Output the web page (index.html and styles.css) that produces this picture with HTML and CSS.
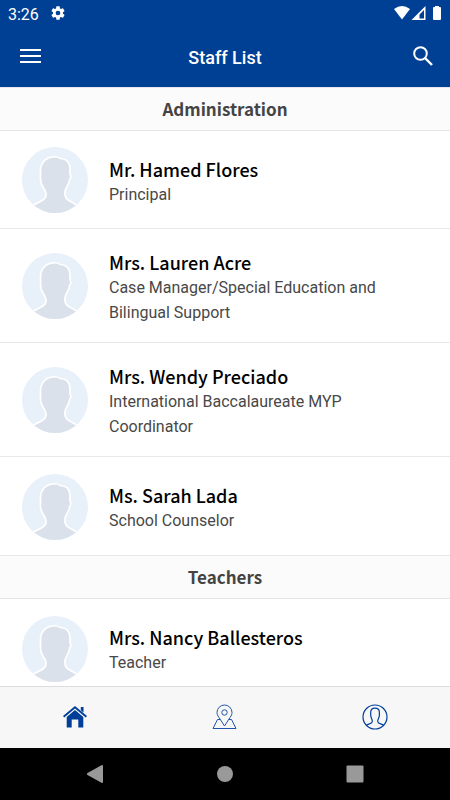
FILE: index.html
```html
<!DOCTYPE html>
<html lang="en">
<head>
<meta charset="utf-8">
<meta name="viewport" content="width=device-width, initial-scale=1">
<title>Staff List</title>
<link rel="stylesheet" href="styles.css">
</head>
<body>
<svg class="defs" aria-hidden="true">
  <defs>
    <clipPath id="disc"><circle cx="33" cy="33" r="33"/></clipPath>
    <symbol id="avatar" viewBox="0 0 66 66">
      <g clip-path="url(#disc)">
        <rect width="66" height="66" fill="#e8f0f9"/>
        <path d="M8 60C12 57 17 56 21.500 52.500C24.500 50.500 24.500 47 23 43.500C21 40 18.500 38 18.500 32V24C18.500 15 24.500 10 32 9.800C35 9.600 36.500 10 38 11.500C44 11.500 47.500 15 48 21V27C49.200 28.500 49 31 47.700 32C47.500 38 43.500 40 43 44.500C42.500 49 43 51 46 53C50 55.500 54 57 58 60.500V70H8Z" fill="#dae1eb" stroke="#fff" stroke-width="1.700"/>
      </g>
    </symbol>
  </defs>
</svg>
<header class="top">
  <div class="status">
    <span>3:26</span>
    <svg class="gear" width="16" height="16" viewBox="0 0 24 24" fill="#fff"><path d="M19.430 12.980c.04-.32.07-.64.07-.98s-.03-.66-.07-.98l2.110-1.650c.19-.15.24-.42.12-.64l-2-3.460c-.12-.22-.39-.3-.61-.22l-2.490 1c-.52-.4-1.080-.73-1.690-.98l-.38-2.650A.488.488 0 0 0 14 2h-4c-.25 0-.46.18-.49.42l-.38 2.650c-.61.25-1.170.59-1.690.98l-2.490-1c-.23-.09-.49 0-.61.22l-2 3.460c-.13.22-.07.49.12.64l2.110 1.650c-.04.32-.07.65-.07.98s.03.66.07.98l-2.110 1.650c-.19.15-.24.42-.12.64l2 3.460c.12.22.39.3.61.22l2.490-1c.52.4 1.080.73 1.690.98l.38 2.650c.03.24.24.42.49.42h4c.25 0 .46-.18.49-.42l.38-2.650c.61-.25 1.170-.59 1.690-.98l2.490 1c.23.09.49 0 .61-.22l2-3.460c.12-.22.07-.49-.12-.64zM12 15.500A3.500 3.500 0 1 1 12 8.500a3.500 3.500 0 0 1 0 7z"/></svg>
    <svg class="signals" width="50" height="16" viewBox="0 0 50 16" fill="#fff">
      <path d="M2 3Q10-3 18 3L10 13.500Z"/>
      <path fill-rule="evenodd" d="M19.500 14L33.500 0V14ZM27.500 8.500V12.500H32V4Z"/>
      <path d="M42 1H43V0H47V1H48Q49 1 49 2V13Q49 14 48 14H42Q41 14 41 13V2Q41 1 42 1Z"/>
    </svg>
  </div>
  <div class="bar">
    <button class="icon-button" type="button" aria-label="Menu">
      <svg width="21" height="16" viewBox="0 0 21 16" fill="#fff"><path d="M0 1H21V3H0ZM0 7H21V9H0ZM0 13H21V15H0Z"/></svg>
    </button>
    <h1>Staff List</h1>
    <button class="icon-button search" type="button" aria-label="Search">
      <svg width="20" height="20" viewBox="0 0 20 20" fill="none" stroke="#fff" stroke-width="2"><circle cx="7.500" cy="7.500" r="6.300"/><path d="M12 12L19 19" stroke-width="2.400"/></svg>
    </button>
  </div>
</header>
<main class="content">
  <section>
    <h2>Administration</h2>
    <ul>
      <li><svg class="avatar"><use href="#avatar"/></svg><div class="info"><h3>Mr. Hamed Flores</h3><p>Principal</p></div></li>
      <li><svg class="avatar"><use href="#avatar"/></svg><div class="info"><h3>Mrs. Lauren Acre</h3><p>Case Manager/Special Education and Bilingual Support</p></div></li>
      <li><svg class="avatar"><use href="#avatar"/></svg><div class="info"><h3>Mrs. Wendy Preciado</h3><p>International Baccalaureate MYP Coordinator</p></div></li>
      <li><svg class="avatar"><use href="#avatar"/></svg><div class="info"><h3>Ms. Sarah Lada</h3><p>School Counselor</p></div></li>
    </ul>
  </section>
  <section>
    <h2>Teachers</h2>
    <ul>
      <li><svg class="avatar"><use href="#avatar"/></svg><div class="info"><h3>Mrs. Nancy Ballesteros</h3><p>Teacher</p></div></li>
    </ul>
  </section>
</main>
<nav class="tabs">
  <a href="#home" aria-label="Home">
    <svg width="26" height="26" viewBox="0 0 26 26" fill="#003f98"><path d="M13 2L25 12L23.800 13.500L13 4.500L2.200 13.500L1 12Z"/><path d="M18.800 3H21.500V8.500L18.800 6.200Z"/><path d="M13 6L21.300 13V23.500H16.300V15.500H9.700V23.500H4.700V13Z"/></svg>
  </a>
  <a href="#map" aria-label="Map">
    <svg width="26" height="26" viewBox="0 0 26 26" fill="none" stroke="#1f55a8" stroke-width="1"><path d="M12.500 22L7 13.500C5.500 11.500 5 10 5 8.500A7.500 7.500 0 0 1 20 8.500C20 10 19.500 11.500 18 13.500Z"/><circle cx="12.500" cy="8.500" r="2.700"/><path d="M8.200 15.500H5.500L1 24.500H24L19.500 15.500H16.800"/></svg>
  </a>
  <a href="#profile" aria-label="Profile">
    <svg width="26" height="26" viewBox="0 0 26 26" fill="none" stroke="#003f98" stroke-width="1.200"><circle cx="13" cy="13" r="12"/><path d="M4.300 21.200C7 19.500 10.300 19.800 10.300 17.500C10.500 15 8.700 14 8.700 11V8.500C8.700 5.500 10.500 4.200 13 4.200C16 4.200 17.400 5.500 17.400 8.500V11C17.400 14 15.600 15 15.700 17.500C15.700 19.800 19 19.500 21.700 21.200"/></svg>
  </a>
</nav>
<footer class="system">
  <button type="button" aria-label="Back"><svg width="18" height="18" viewBox="0 0 18 18" fill="#999"><path d="M1.500 8L15.500 .2Q17 -.2 17 1V17Q17 18.200 15.500 17.800L1.500 10Q.3 9 1.500 8Z"/></svg></button>
  <button type="button" aria-label="Home screen"><svg width="18" height="18" viewBox="0 0 18 18" fill="#999"><circle cx="9" cy="9" r="8"/></svg></button>
  <button type="button" aria-label="Recent apps"><svg width="18" height="18" viewBox="0 0 18 18" fill="#999"><rect x=".5" y=".5" width="17" height="17" rx="1"/></svg></button>
</footer>
</body>
</html>
```
FILE: styles.css
```css
* {
  box-sizing: border-box;
}

body {
  margin: 0;
  height: 100vh;
  display: flex;
  flex-direction: column;
  background: #fff;
  font-family: Roboto, "Liberation Sans", sans-serif;
}

h1, h2, h3, p, ul {
  margin: 0;
  padding: 0;
}

svg {
  display: block;
  flex: none;
}

button {
  padding: 0;
  border: 0;
  background: none;
}

.defs {
  position: absolute;
  width: 0;
  height: 0;
}

.top {
  flex: none;
  border-bottom: 1px solid #e6e6ec;
  background: #004094;
  color: #fff;
}

.status {
  display: flex;
  align-items: center;
  height: 28px;
  padding: 0 8px;
  font-size: 16px;
}

.gear {
  margin-left: 11px;
  margin-bottom: 2px;
}

.signals {
  margin-left: auto;
}

.bar {
  display: grid;
  grid-template-columns: 60px 1fr 60px;
  align-items: center;
  height: 59px;
}

.bar h1 {
  text-align: center;
  font-size: 18px;
  line-height: 24px;
  font-weight: 500;
}

.icon-button {
  height: 40px;
  padding: 0 0 3px 20px;
}

.search {
  padding-left: 23px;
}

.content {
  flex: 1;
  min-height: 0;
  overflow-y: auto;
  scrollbar-width: none;
}

h2, h3 {
  font-family: "Noto Sans CJK SC", "Noto Sans", sans-serif;
}

h2 {
  height: 43px;
  border-bottom: 1px solid #e4e4e4;
  background: #fbfbfb;
  color: #444;
  text-align: center;
  font-size: 17px;
  line-height: 42px;
  font-weight: 700;
}

ul {
  list-style: none;
}

li {
  display: flex;
  align-items: center;
  gap: 21px;
  min-height: 98px;
  padding: 16px 22px 15px;
  border-bottom: 1px solid #e8e8e8;
}

li:last-child {
  min-height: 99px;
}

.avatar {
  width: 66px;
  height: 66px;
}

.info {
  flex: 1;
  max-width: 290px;
  padding: 5px 0 2px;
}

h3 {
  color: #000;
  font-size: 18px;
  line-height: 25px;
  font-weight: 500;
}

p {
  color: #484848;
  font-size: 16px;
  line-height: 25px;
}

.tabs {
  flex: none;
  display: grid;
  grid-template-columns: repeat(3, 1fr);
  height: 62px;
  padding-bottom: 2px;
  border-top: 1px solid #dcdcdc;
  background: #f7f7f7;
}

.tabs a {
  display: flex;
  align-items: center;
  justify-content: center;
}

.system {
  flex: none;
  display: flex;
  justify-content: center;
  align-items: center;
  gap: 112px;
  height: 52px;
  background: #000;
}
```
